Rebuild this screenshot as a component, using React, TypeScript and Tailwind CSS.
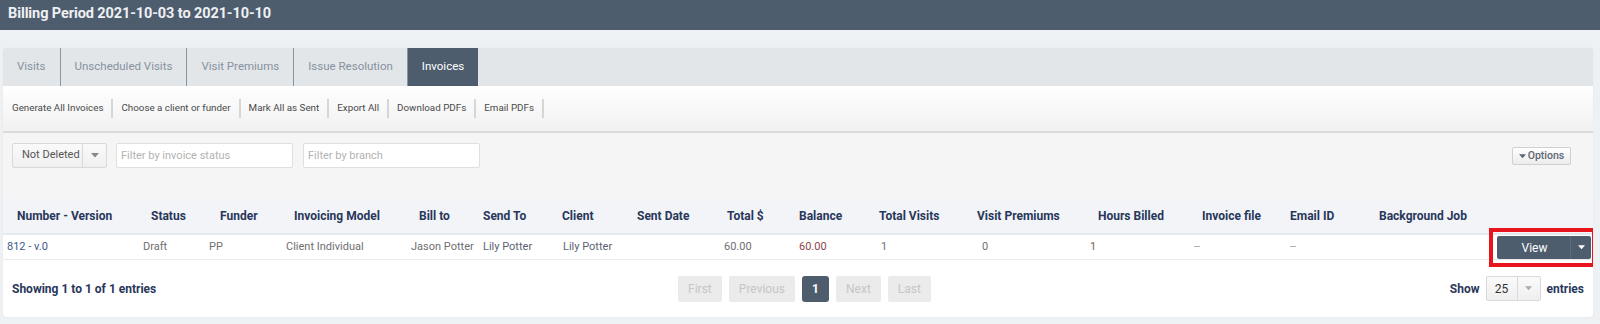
import React from 'react';

const tabs = ['Visits', 'Unscheduled Visits', 'Visit Premiums', 'Issue Resolution', 'Invoices'];
const actions = ['Generate All Invoices', 'Choose a client or funder', 'Mark All as Sent', 'Export All', 'Download PDFs', 'Email PDFs'];

// width, header left padding, data left padding
const columns: { label: string; w: number; hp: number; dp: number }[] = [
  { label: 'Number - Version', w: 140, hp: 14, dp: 4 },
  { label: 'Status', w: 66, hp: 8, dp: 0 },
  { label: 'Funder', w: 77, hp: 11, dp: 0 },
  { label: 'Invoicing Model', w: 125, hp: 8, dp: 0 },
  { label: 'Bill to', w: 72, hp: 8, dp: 0 },
  { label: 'Send To', w: 79, hp: 0, dp: 0 },
  { label: 'Client', w: 75, hp: 0, dp: 1 },
  { label: 'Sent Date', w: 86, hp: 0, dp: 0 },
  { label: 'Total $', w: 76, hp: 4, dp: 1 },
  { label: 'Balance', w: 80, hp: 0, dp: 0 },
  { label: 'Total Visits', w: 98, hp: 0, dp: 2 },
  { label: 'Visit Premiums', w: 113, hp: 0, dp: 5 },
  { label: 'Hours Billed', w: 104, hp: 8, dp: 0 },
  { label: 'Invoice file', w: 96, hp: 8, dp: 0 },
  { label: 'Email ID', w: 89, hp: 0, dp: 0 },
  { label: 'Background Job', w: 118, hp: 0, dp: 0 },
];

const row: { text: string; cls: string }[] = [
  { text: '812 - v.0', cls: 'text-[#3d5a88]' },
  { text: 'Draft', cls: 'text-[#6f6f6f]' },
  { text: 'PP', cls: 'text-[#6f6f6f]' },
  { text: 'Client Individual', cls: 'text-[#6f6f6f]' },
  { text: 'Jason Potter', cls: 'text-[#6f6f6f]' },
  { text: 'Lily Potter', cls: 'text-[#5a6272]' },
  { text: 'Lily Potter', cls: 'text-[#5a6272]' },
  { text: '', cls: '' },
  { text: '60.00', cls: 'text-[#6f6f6f]' },
  { text: '60.00', cls: 'text-[#8c4646]' },
  { text: '1', cls: 'text-[#6f6f6f]' },
  { text: '0', cls: 'text-[#6f6f6f]' },
  { text: '1', cls: 'text-[#7a6a4a]' },
  { text: '--', cls: 'text-[#9a9a9a]' },
  { text: '--', cls: 'text-[#9a9a9a]' },
  { text: '', cls: '' },
];

function Caret({ className }: { className?: string }) {
  return (
    <svg width="8" height="5" viewBox="0 0 8 5" className={className}>
      <path d="M0 0 L8 0 L4 4.5 Z" fill="currentColor" />
    </svg>
  );
}

export default function App() {
  return (
    <div className="w-[1600px] h-[324px] overflow-hidden bg-[#eef1f4] font-['Roboto','Liberation_Sans',sans-serif]">
      {/* Title bar */}
      <div className="h-[30px] bg-[#4e5d6e] flex items-center pl-[8px] pb-[3px]">
        <h1 className="text-[14.5px] font-bold text-[#eef0f3] tracking-[-0.1px]">Billing Period 2021-10-03 to 2021-10-10</h1>
      </div>

      {/* Panel */}
      <div className="mt-[18px] ml-[3px] w-[1590px] bg-white rounded-[3px] shadow-[0_0_1px_rgba(0,0,0,0.15)] overflow-hidden">
        {/* Tabs */}
        <div className="h-[38px] bg-[#e3e6e9] flex">
          {tabs.map((t) => {
            const active = t === 'Invoices';
            return (
              <div
                key={t}
                className={
                  active
                    ? 'px-[14px] flex items-center bg-[#4e5d6e] text-white text-[11.5px]'
                    : 'px-[14px] flex items-center text-[#8592a0] text-[11.5px] border-r border-[#8794a2]'
                }
              >
                {t}
              </div>
            );
          })}
        </div>

        {/* Action toolbar */}
        <div className="h-[47px] bg-gradient-to-b from-white to-[#f1f1f1] border-b-2 border-[#dcdcdc] flex items-center">
          {actions.map((a, i) => (
            <div
              key={a}
              className={
                i === 0
                  ? 'pl-[9px] pr-[8px] h-[19px] flex items-center border-r-2 border-[#d6d6d6] text-[9.8px] text-[#4a4a4a]'
                  : 'px-[8px] h-[19px] flex items-center border-r-2 border-[#d6d6d6] text-[9.8px] text-[#4a4a4a]'
              }
            >
              {a}
            </div>
          ))}
        </div>

        {/* Filters */}
        <div className="h-[66px] bg-[#f5f5f5] flex items-start pt-[10px] pl-[9px] pr-[22px]">
          <div className="flex h-[25px] w-[95px] border border-[#d9d9d9] rounded-[2px] bg-gradient-to-b from-[#fafafa] to-[#efefef] text-[11px] text-[#555]">
            <div className="flex-1 flex items-center pl-[9px]">Not Deleted</div>
            <div className="w-[24px] border-l border-[#d9d9d9] flex items-center justify-center text-[#888]">
              <Caret />
            </div>
          </div>
          <input
            placeholder="Filter by invoice status"
            className="ml-[9px] h-[25px] w-[177px] border border-[#dfdfdf] rounded-[2px] bg-white px-[4px] text-[11px] placeholder-[#b3b3b3] outline-none"
          />
          <input
            placeholder="Filter by branch"
            className="ml-[10px] h-[25px] w-[177px] border border-[#dfdfdf] rounded-[2px] bg-white px-[4px] text-[11px] placeholder-[#b3b3b3] outline-none"
          />
          <button className="ml-auto mt-[4px] h-[18px] w-[59px] border border-[#d0d0d0] rounded-[2px] bg-gradient-to-b from-white to-[#ececec] flex items-center justify-center gap-[2px] text-[10.5px] font-medium text-[#5e6673]">
            <Caret className="w-[7px]" />
            Options
          </button>
        </div>

        {/* Table */}
        <table className="table-fixed w-full border-collapse">
          <colgroup>
            {columns.map((c) => (
              <col key={c.label} style={{ width: c.w }} />
            ))}
            <col />
          </colgroup>
          <thead>
            <tr className="h-[35px] bg-[#f2f4f8] border-b-2 border-[#e4e8ef]">
              {columns.map((c) => (
                <th
                  key={c.label}
                  style={{ paddingLeft: c.hp }}
                  className="text-left text-[12px] font-bold text-[#28375a] whitespace-nowrap pb-[1px]"
                >
                  {c.label}
                </th>
              ))}
              <th />
            </tr>
          </thead>
          <tbody>
            <tr className="h-[24px] border-b border-[#ebebeb]">
              {row.map((r, i) => (
                <td key={i} style={{ paddingLeft: columns[i].dp }} className={`text-[11px] whitespace-nowrap pt-[1px] ${r.cls}`}>
                  {r.text}
                </td>
              ))}
              <td className="pr-[3px] pt-[1px]">
                <div className="relative">
                  <div className="h-[23px] w-[94px] ml-auto bg-[#4e5d6e] rounded-[2px] flex text-white text-[12px]">
                    <div className="flex-1 flex items-center justify-center pl-[2px]">View</div>
                    <div className="w-[21px] border-l border-[#5d6b7b] flex items-center justify-center">
                      <Caret className="w-[7px]" />
                    </div>
                  </div>
                  <div className="absolute -left-[8px] -top-[8px] w-[107px] h-[39px] border-[4px] border-[#e8141e]" />
                </div>
              </td>
            </tr>
          </tbody>
        </table>

        {/* Footer */}
        <div className="h-[57px] grid grid-cols-[1fr_auto_1fr] items-center pl-[9px] pr-[9px]">
          <div className="text-[12px] font-bold text-[#28375a]">Showing 1 to 1 of 1 entries</div>
          <div className="flex gap-[7px] ml-[13px] text-[12px]">
            <span className="h-[26px] px-[10px] flex items-center bg-[#ebebeb] text-[#c6c6c6] rounded-[2px]">First</span>
            <span className="h-[26px] px-[10px] flex items-center bg-[#ebebeb] text-[#c6c6c6] rounded-[2px]">Previous</span>
            <span className="h-[26px] w-[27px] flex items-center justify-center bg-[#4e5d6e] text-white font-bold rounded-[3px]">1</span>
            <span className="h-[26px] px-[10px] flex items-center bg-[#ebebeb] text-[#c6c6c6] rounded-[2px]">Next</span>
            <span className="h-[26px] px-[10px] flex items-center bg-[#ebebeb] text-[#c6c6c6] rounded-[2px]">Last</span>
          </div>
          <div className="flex items-center justify-end gap-[6px] text-[12px] font-bold text-[#28375a]">
            Show
            <div className="flex h-[25px] w-[55px] border border-[#d9d9d9] rounded-[2px] bg-gradient-to-b from-[#fafafa] to-[#efefef] font-normal text-[#333]">
              <div className="flex-1 flex items-center justify-center">25</div>
              <div className="w-[23px] border-l border-[#d9d9d9] flex items-center justify-center text-[#aaa]">
                <Caret className="w-[7px]" />
              </div>
            </div>
            entries
          </div>
        </div>
      </div>
    </div>
  );
}
